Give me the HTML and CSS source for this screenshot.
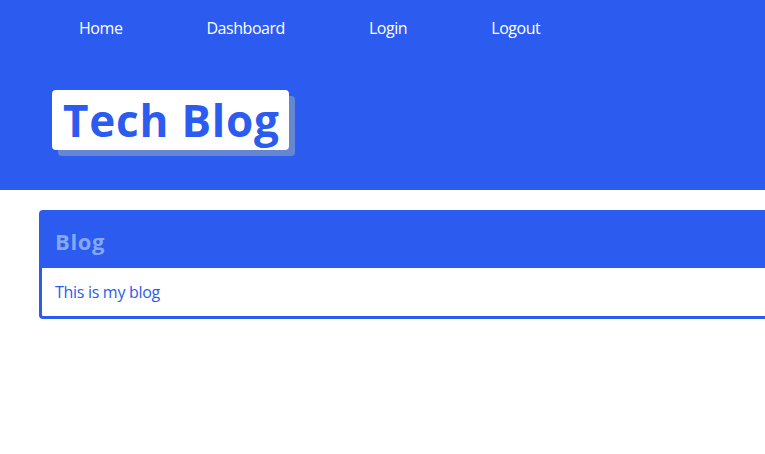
FILE: index.html
```html
<!DOCTYPE html>
<html>
<head>
<meta charset="utf-8">
<link rel="stylesheet" href="styles.css">
</head>
<body>
<header class="site-header">
  <nav class="nav">
    <a class="nav-link" href="#">Home</a>
    <a class="nav-link" href="#">Dashboard</a>
    <a class="nav-link" href="#">Login</a>
    <a class="nav-link" href="#">Logout</a>
  </nav>
  <div class="brand-wrap">
    <h1 class="brand">Tech Blog</h1>
  </div>
</header>
<main class="main">
  <section class="card">
    <h2 class="card-title">Blog</h2>
    <p class="card-body">This is my blog</p>
  </section>
</main>
</body>
</html>
```

FILE: styles.css
```css
html, body {
  margin: 0;
  padding: 0;
  background: #ffffff;
  font-family: "Open Sans", "Noto Sans", sans-serif;
}
.site-header {
  background: #2b5bef;
  height: 190px;
  box-sizing: border-box;
  padding-top: 17px;
}
.nav {
  display: flex;
  gap: 84px;
  padding-left: 79px;
}
.nav-link {
  color: #ffffff;
  text-decoration: none;
  font-size: 16px;
  line-height: 22px;
  letter-spacing: -0.45px;
}
.brand-wrap {
  padding: 51px 0 0 52px;
  display: flex;
}
.brand {
  margin: 0;
  background: #ffffff;
  color: #2b5bef;
  font-size: 44px;
  font-weight: 700;
  line-height: 60px;
  height: 60px;
  padding: 0 9px 0 11px;
  border-radius: 4px;
  box-shadow: 6px 6px 0 #6686d2;
  letter-spacing: 0.8px;
}
.main {
  padding: 20px 0 0 39px;
}
.card {
  border: 3px solid #2b5bef;
  border-radius: 4px;
  width: 100%;
}
.card-title {
  margin: 0;
  background: #2b5bef;
  color: #84a8f2;
  font-size: 22px;
  font-weight: 700;
  line-height: 27px;
  padding: 15px 13px 13px;
  letter-spacing: 0.6px;
}
.card-body {
  margin: 0;
  color: #2b5bef;
  font-size: 16px;
  line-height: 22px;
  padding: 13px 13px 13px;
  letter-spacing: -0.3px;
}
```
